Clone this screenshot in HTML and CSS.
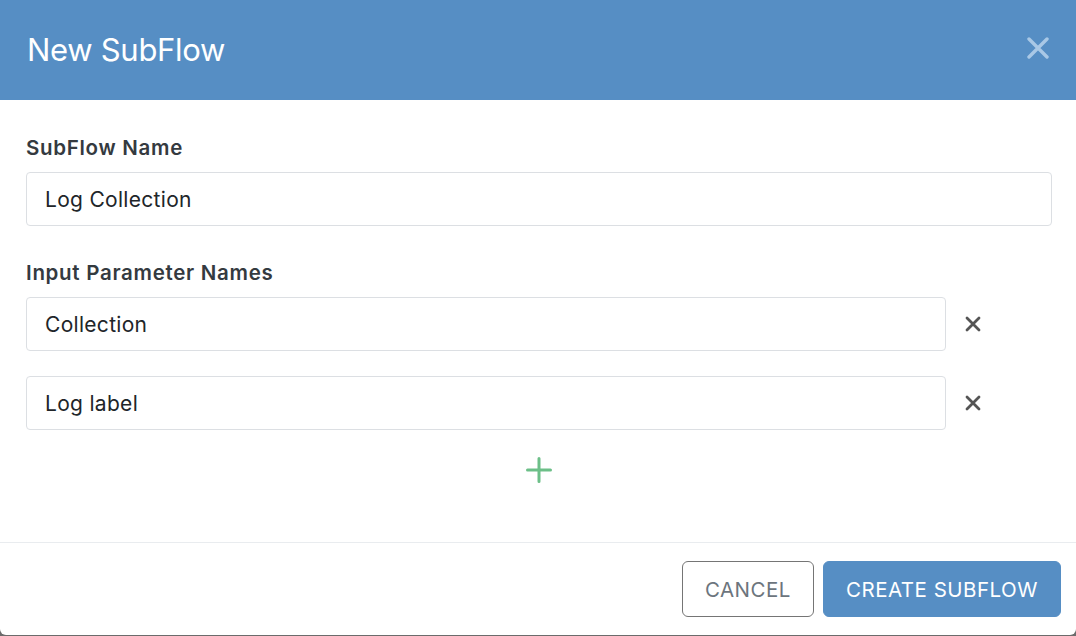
FILE: index.html
```html
<!DOCTYPE html>
<html lang="en">
<head>
    <meta charset="UTF-8">
    <title>New SubFlow</title>
    <link rel="stylesheet" href="styles.css">
</head>
<body>
    <div class="modal">
        <div class="modal-header">
            <h1>New SubFlow</h1>
            <button class="close" aria-label="Close">
                <svg width="22" height="22" viewBox="0 0 22 22"><path d="M2 2L20 20M20 2L2 20" stroke="currentColor" stroke-width="3.4" stroke-linecap="round"/></svg>
            </button>
        </div>

        <div class="modal-body">
            <label class="label">SubFlow Name</label>
            <input class="field" type="text" value="Log Collection">

            <label class="label second">Input Parameter Names</label>
            <div class="param-row">
                <input class="field" type="text" value="Collection">
                <button class="remove" aria-label="Remove">
                    <svg width="16" height="16" viewBox="0 0 16 16"><path d="M2 2L14 14M14 2L2 14" stroke="currentColor" stroke-width="2.8" stroke-linecap="round"/></svg>
                </button>
            </div>
            <div class="param-row">
                <input class="field" type="text" value="Log label">
                <button class="remove" aria-label="Remove">
                    <svg width="16" height="16" viewBox="0 0 16 16"><path d="M2 2L14 14M14 2L2 14" stroke="currentColor" stroke-width="2.8" stroke-linecap="round"/></svg>
                </button>
            </div>

            <div class="add-row">
                <button class="add" aria-label="Add parameter">
                    <svg width="26" height="26" viewBox="0 0 26 26"><path d="M13 1.5V24.5M1.5 13H24.5" stroke="currentColor" stroke-width="3" stroke-linecap="round"/></svg>
                </button>
            </div>
        </div>

        <div class="modal-footer">
            <button class="btn btn-outline">Cancel</button>
            <button class="btn btn-primary">Create SubFlow</button>
        </div>
    </div>
</body>
</html>
```

FILE: styles.css
```css
html, body {
    margin: 0;
    height: 100%;
}
body {
    background: #6b6b6b;
    font-family: Inter, "Liberation Sans", sans-serif;
    color: #212529;
}
.modal {
    width: 1076px;
    height: 635px;
    background: white;
    border-radius: 0 0 6px 6px;
    display: flex;
    flex-direction: column;
    overflow: hidden;
}
.modal-header {
    height: 100px;
    background: #568ec4;
    display: flex;
    align-items: center;
    justify-content: space-between;
    padding: 0 27px 0 27px;
    box-sizing: border-box;
    flex-shrink: 0;
}
.modal-header h1 {
    margin: 0;
    color: white;
    font-size: 31px;
    font-weight: 400;
    letter-spacing: -0.3px;
    padding-bottom: 2px;
}
.close {
    background: none;
    border: none;
    padding: 0;
    color: #a9c8e6;
    display: flex;
    margin-bottom: 4px;
}
.modal-body {
    flex: 1;
    padding: 36px 24px 0 26px;
}
.label {
    display: block;
    font-size: 20.5px;
    font-weight: 600;
    letter-spacing: 0.7px;
    color: #343a40;
    line-height: 24px;
    margin-bottom: 12px;
}
.label.second {
    margin-top: 35px;
}
.field {
    display: block;
    width: 100%;
    box-sizing: border-box;
    height: 54px;
    border: 1px solid #dcdfe3;
    border-radius: 4px;
    padding: 0 18px;
    font-family: inherit;
    font-size: 21px;
    letter-spacing: 0.3px;
    color: #212529;
    outline: none;
}
.param-row {
    display: flex;
    align-items: center;
    margin-bottom: 25px;
    padding-right: 71px;
}
.param-row .field {
    flex: 1;
}
.remove {
    background: none;
    border: none;
    padding: 0;
    margin-left: 19px;
    color: #555;
    display: flex;
}
.add-row {
    display: flex;
    justify-content: center;
    padding-top: 2px;
}
.add {
    background: none;
    border: none;
    padding: 0;
    color: #6cbf88;
    display: flex;
}
.modal-footer {
    border-top: 1px solid #e9ecef;
    display: flex;
    justify-content: flex-end;
    gap: 9px;
    padding: 18px 15px 18px 0;
}
.btn {
    height: 56px;
    border-radius: 6px;
    font-family: inherit;
    font-size: 20.5px;
    letter-spacing: 0.5px;
    text-transform: uppercase;
    padding: 0 22px;
    cursor: pointer;
}
.btn-outline {
    background: white;
    border: 1px solid #757575;
    color: #6c757d;
}
.btn-primary {
    background: #568ec4;
    border: 1px solid #568ec4;
    color: white;
}
```
